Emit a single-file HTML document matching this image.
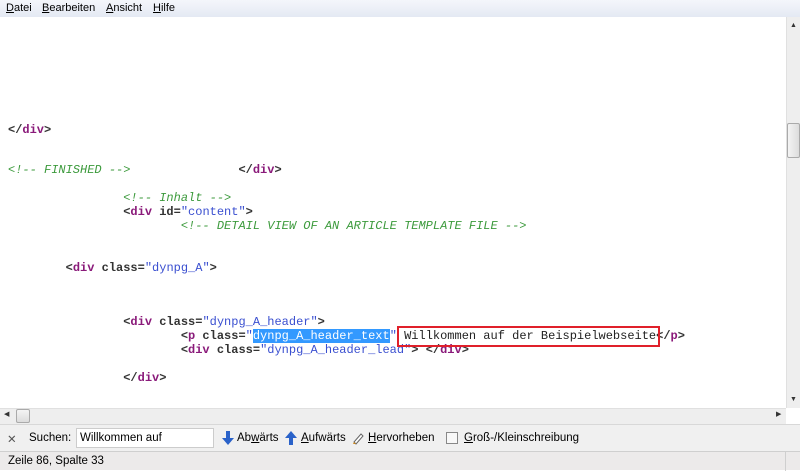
<!DOCTYPE html>
<html><head><meta charset="utf-8"><style>
*{margin:0;padding:0;box-sizing:border-box}
body{width:800px;height:470px;overflow:hidden;background:#fff;font-family:"Liberation Sans",sans-serif;position:relative}
#menu{position:absolute;left:0;top:0;width:800px;height:17px;background:linear-gradient(#f4f6fb,#e4e9f3);font-size:11px;color:#000}
#menu span{position:absolute;top:2px}
#menu u{text-decoration:underline}
.l{position:absolute;left:8px;font-family:"Liberation Mono",monospace;font-size:12px;font-weight:bold;white-space:pre;line-height:14px;color:#333}
.t{color:#8a1a7a}.s{color:#3a4fd0;font-weight:normal}.c{color:#3c9a3c;font-style:italic;font-weight:normal}
.hl{background:#3399ff;color:#fff}
#vs{position:absolute;left:786px;top:17px;width:14px;height:391px;background:#eeeeee;border-left:1px solid #e0e0e0}
#thumb{position:absolute;left:787px;top:123px;width:13px;height:35px;background:linear-gradient(90deg,#f4f4f4,#dcdcdc);border:1px solid #aaa;border-radius:2px}
#hs{position:absolute;left:0;top:408px;width:786px;height:16px;background:#eeeeee;border-top:1px solid #e0e0e0}
#hthumb{position:absolute;left:16px;top:409px;width:14px;height:14px;background:linear-gradient(#f4f4f4,#dcdcdc);border:1px solid #aaa;border-radius:2px}
#find{position:absolute;left:0;top:424px;width:800px;height:27px;background:#f0f0f0;border-top:1px solid #d8d8d8;font-size:11.5px}
#find span{position:absolute;top:7px}
#status{position:absolute;left:0;top:451px;width:800px;height:19px;background:#eceaea;border-top:1px solid #cfcfcf;font-size:11.5px}
</style></head><body>
<div id="menu"><span style="left:6px"><u>D</u>atei</span><span style="left:42px"><u>B</u>earbeiten</span><span style="left:106px"><u>A</u>nsicht</span><span style="left:153px"><u>H</u>ilfe</span></div>

<div class="l" style="top:123px">&lt;/<span class="t">div</span>&gt;</div>
<div class="l" style="top:163px"><span class="c">&lt;!-- FINISHED --&gt;</span>               &lt;/<span class="t">div</span>&gt;</div>
<div class="l" style="top:191px">                <span class="c">&lt;!-- Inhalt --&gt;</span></div>
<div class="l" style="top:205px">                &lt;<span class="t">div</span> id=<span class="s">"content"</span>&gt;</div>
<div class="l" style="top:219px">                        <span class="c">&lt;!-- DETAIL VIEW OF AN ARTICLE TEMPLATE FILE --&gt;</span></div>
<div class="l" style="top:261px">        &lt;<span class="t">div</span> class=<span class="s">"dynpg_A"</span>&gt;</div>
<div class="l" style="top:315px">                &lt;<span class="t">div</span> class=<span class="s">"dynpg_A_header"</span>&gt;</div>
<div class="l" style="top:329px">                        &lt;<span class="t">p</span> class=<span class="s">"<span class="hl">dynpg_A_header_text</span>"</span> <span style="font-weight:normal;color:#222">Willkommen auf der Beispielwebseite</span>&lt;/<span class="t">p</span>&gt;</div>
<div class="l" style="top:343px">                        &lt;<span class="t">div</span> class=<span class="s">"dynpg_A_header_lead"</span>&gt; &lt;/<span class="t">div</span>&gt;</div>
<div class="l" style="top:371px">                &lt;/<span class="t">div</span>&gt;</div>
<div style="position:absolute;left:397px;top:326px;width:263px;height:21px;border:2px solid #e0202a"></div>

<div id="vs"></div><div id="thumb"></div>
<div style="position:absolute;left:790px;top:22px;font-size:7px;color:#333">▲</div>
<div style="position:absolute;left:790px;top:396px;font-size:7px;color:#333">▼</div>
<div id="hs"></div><div id="hthumb"></div>
<div style="position:absolute;left:4px;top:410px;font-size:7px;color:#333">◀</div>
<div style="position:absolute;left:776px;top:410px;font-size:7px;color:#333">▶</div>

<div id="find">
<span style="left:7px;color:#555">✕</span>
<span style="left:29px">Suchen:</span>
<div style="position:absolute;left:76px;top:3px;width:138px;height:20px;background:#fff;border:1px solid #ccc;font-size:11.5px;padding:3px 3px">Willkommen auf</div>
<svg style="position:absolute;left:222px;top:6px" width="12" height="14" viewBox="0 0 12 14"><path d="M4 0h4v7h4l-6 7-6-7h4z" fill="#2a62c9"/></svg>
<span style="left:237px">Ab<u>w</u>ärts</span>
<svg style="position:absolute;left:285px;top:6px" width="12" height="14" viewBox="0 0 12 14"><path d="M4 14h4V7h4L6 0 0 7h4z" fill="#2a62c9"/></svg>
<span style="left:301px"><u>A</u>ufwärts</span>
<svg style="position:absolute;left:352px;top:7px" width="12" height="13" viewBox="0 0 12 13"><path d="M2 10l7-8 2 2-7 8z" fill="#fff" stroke="#666"/><path d="M1 12l1-2 2 2z" fill="#d08a20"/></svg>
<span style="left:368px"><u>H</u>ervorheben</span>
<div style="position:absolute;left:446px;top:7px;width:12px;height:12px;border:1px solid #888;background:#f8f8f8"></div>
<span style="left:464px"><u>G</u>roß-/Kleinschreibung</span>
</div>
<div id="status"><span style="position:absolute;left:8px;top:3px">Zeile 86, Spalte 33</span>
<div style="position:absolute;left:785px;top:0;width:1px;height:19px;background:#cfcfcf"></div></div>
</body></html>
